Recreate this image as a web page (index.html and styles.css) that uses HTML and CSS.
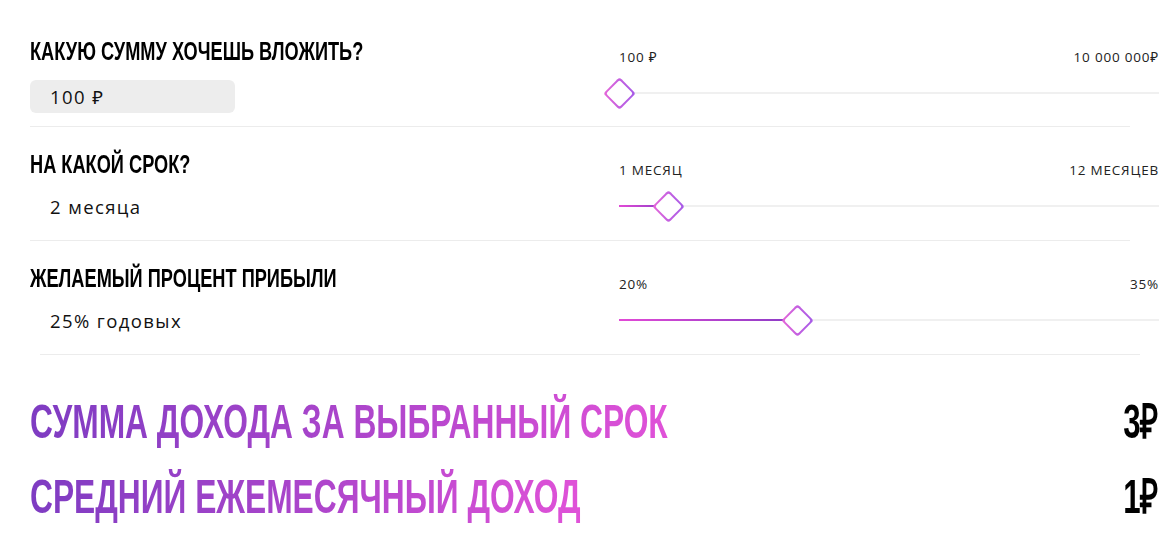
FILE: index.html
```html
<!DOCTYPE html>
<html lang="ru">
<head>
<meta charset="utf-8">
<link rel="stylesheet" href="styles.css">
</head>
<body>
<div class="calc">
  <div class="row row-first">
    <div class="left">
      <h2 class="q"><span class="narrow">КАКУЮ СУММУ ХОЧЕШЬ ВЛОЖИТЬ?</span></h2>
      <div class="value input">100 ₽</div>
    </div>
    <div class="slider">
      <div class="labels"><span>100 ₽</span><span>10 000 000₽</span></div>
      <div class="track">
        <div class="fill" style="width:0px"></div>
        <div class="thumb" style="left:0px"></div>
      </div>
    </div>
  </div>
  <div class="divider"></div>
  <div class="row">
    <div class="left">
      <h2 class="q"><span class="narrow">НА КАКОЙ СРОК?</span></h2>
      <div class="value">2 месяца</div>
    </div>
    <div class="slider">
      <div class="labels"><span>1 МЕСЯЦ</span><span>12 МЕСЯЦЕВ</span></div>
      <div class="track">
        <div class="fill" style="width:49px"></div>
        <div class="thumb" style="left:49px"></div>
      </div>
    </div>
  </div>
  <div class="divider"></div>
  <div class="row">
    <div class="left">
      <h2 class="q"><span class="narrow">ЖЕЛАЕМЫЙ ПРОЦЕНТ ПРИБЫЛИ</span></h2>
      <div class="value">25% годовых</div>
    </div>
    <div class="slider">
      <div class="labels"><span>20%</span><span>35%</span></div>
      <div class="track">
        <div class="fill" style="width:178px"></div>
        <div class="thumb" style="left:178px"></div>
      </div>
    </div>
  </div>
  <div class="divider divider-shift"></div>
  <div class="results">
    <div class="result"><span class="r-title">СУММА ДОХОДА ЗА ВЫБРАННЫЙ СРОК</span><span class="r-val">3₽</span></div>
    <div class="result"><span class="r-title">СРЕДНИЙ ЕЖЕМЕСЯЧНЫЙ ДОХОД</span><span class="r-val">1₽</span></div>
  </div>
</div>
</body>
</html>
```
FILE: styles.css
```css
* { box-sizing: border-box; }
html, body { margin: 0; padding: 0; background: #fff; }
body { font-family: "Open Sans", "Noto Sans", sans-serif; color: #111; }

.calc { padding: 16px 14px 0 30px; }

.row {
  display: grid;
  grid-template-columns: 589px 540px;
  padding: 20px 0 17px;
}
.row-first { padding-top: 18px; padding-bottom: 13px; }

.q {
  margin: 0;
  font-family: "Liberation Sans", Arial, sans-serif;
  font-weight: 700;
  font-size: 25px;
  line-height: 34px;
  color: #000;
  white-space: nowrap;
}
.narrow {
  display: inline-block;
  transform: scaleX(0.728);
  transform-origin: left center;
}

.value {
  margin-top: 9px;
  height: 33px;
  line-height: 33px;
  padding-left: 20px;
  font-size: 18.5px;
  letter-spacing: 1.4px;
  color: #111;
}
.row-first .value { margin-top: 12px; }
.input {
  width: 205px;
  background: #ededed;
  border-radius: 6px;
}

.slider { padding-top: 14px; }
.labels {
  display: flex;
  justify-content: space-between;
  font-size: 13.5px;
  letter-spacing: 0.8px;
  line-height: 18px;
  color: #222;
}
.track {
  position: relative;
  margin-top: 26px;
  height: 2px;
  background: #f0f0f0;
}
.fill {
  height: 2px;
  background: linear-gradient(90deg, #e24ad6, #8a3cc6);
}
.thumb {
  position: absolute;
  top: 1px;
  width: 23px;
  height: 23px;
  margin-left: -11px;
  margin-top: -11.5px;
  transform: rotate(45deg);
  border-radius: 3px;
  padding: 2px;
  background: linear-gradient(45deg, #e666d8, #a45ae8);
}
.thumb::after {
  content: "";
  display: block;
  width: 100%;
  height: 100%;
  background: #fff;
  border-radius: 2px;
}

.divider {
  height: 1px;
  background: #ececec;
  width: 1100px;
}
.divider-shift { margin-left: 10px; }

.results { padding-top: 37px; }
.result {
  display: flex;
  justify-content: space-between;
  align-items: center;
  height: 60px;
  margin-bottom: 15px;
  font-family: "Liberation Sans", Arial, sans-serif;
  font-weight: 700;
  font-size: 48px;
  line-height: 60px;
  white-space: nowrap;
}
.r-title {
  display: inline-block;
  transform: scaleX(0.661);
  transform-origin: left center;
  background: linear-gradient(90deg, #7e3cc2 0%, #b046cc 55%, #e052d8 100%);
  -webkit-background-clip: text;
  background-clip: text;
  color: transparent;
}
.r-val {
  display: inline-block;
  transform: scaleX(0.65);
  transform-origin: right center;
  color: #000;
}
```
